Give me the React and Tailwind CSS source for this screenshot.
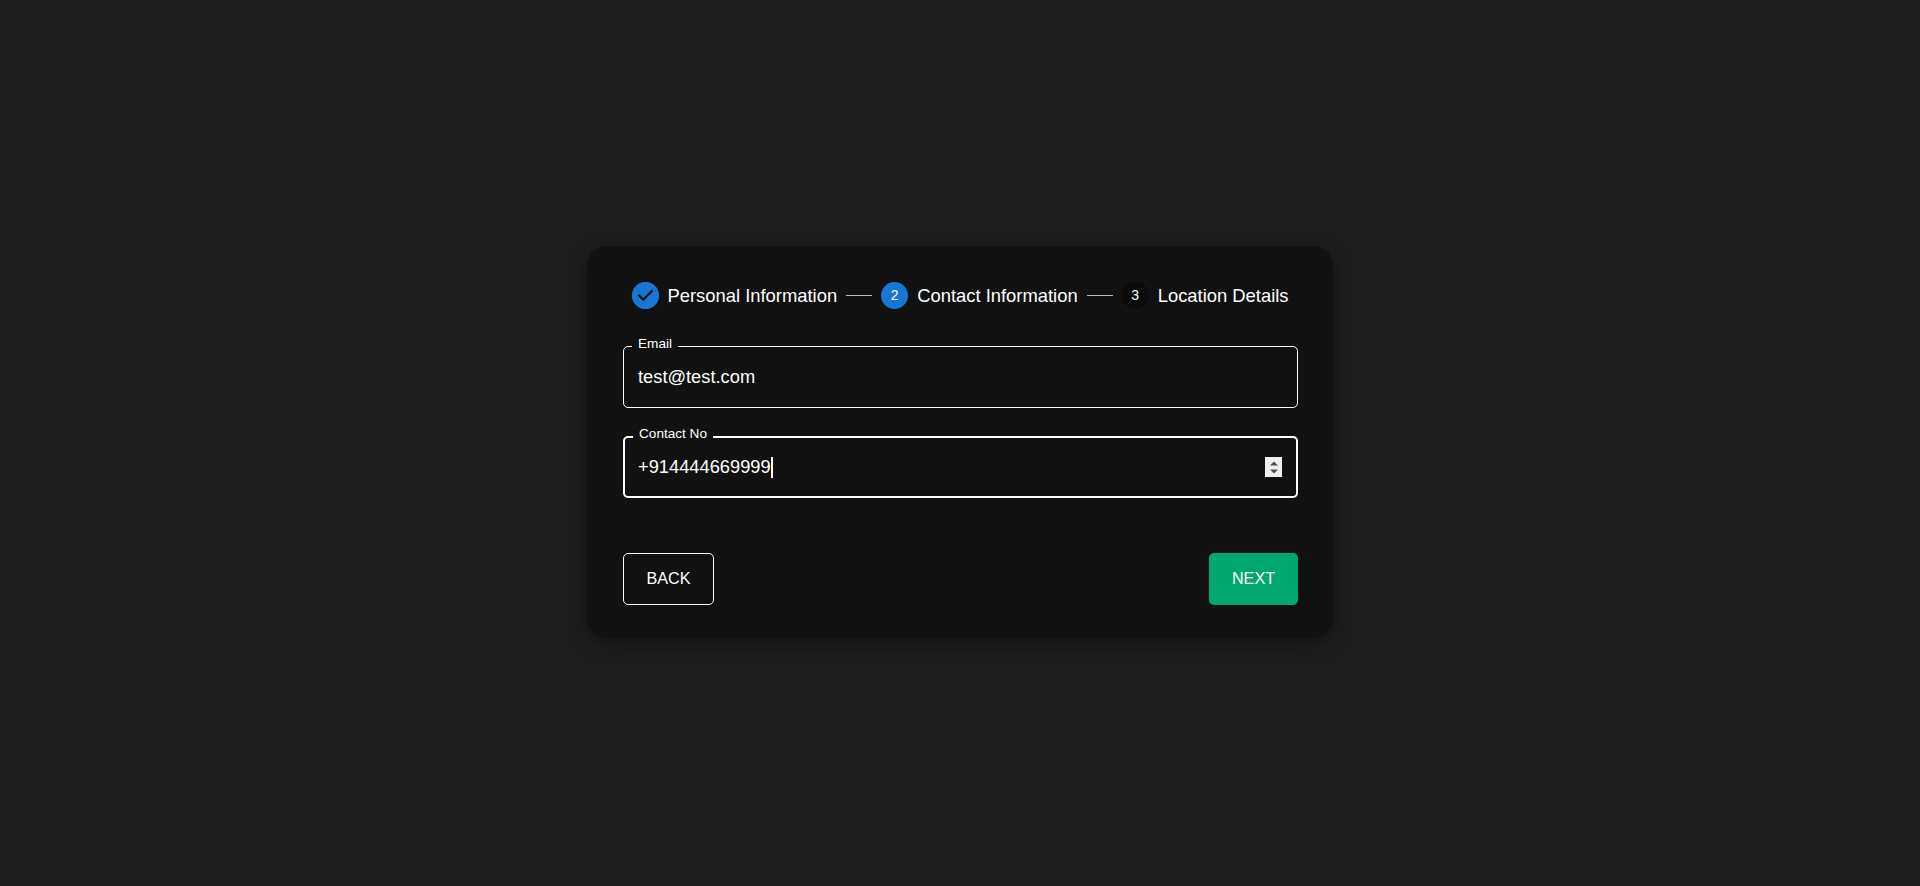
const font = "[font-family:'Liberation_Sans',Arial,sans-serif]";

function StepCircle({ children, dark }) {
  return (
    <div
      className={`w-[27px] h-[27px] rounded-full flex items-center justify-center shrink-0 text-[14px] text-white ${
        dark ? 'bg-[#0a0a0a]' : 'bg-[#1976d2]'
      }`}
    >
      {children}
    </div>
  );
}

function Connector() {
  return <div className="w-[26px] h-px bg-[#bdbdbd] mx-[9px] shrink-0" />;
}

function Field({ label, focused, children }) {
  return (
    <div
      className={`relative h-[62px] rounded-[5px] border-white flex items-center pr-[14px] ${
        focused ? 'border-2 pl-[13px]' : 'border pl-[14px]'
      }`}
    >
      <span
        className={`absolute left-[8px] px-[6px] bg-[#111111] text-[13.6px] leading-[15px] text-white ${
          focused ? '-top-[12px]' : '-top-[11px]'
        }`}
      >
        {label}
      </span>
      {children}
    </div>
  );
}

export default function App() {
  return (
    <div className={`${font} min-h-[886px] bg-[#1e1e1e] flex items-center justify-center text-white`}>
      <div className="w-[746px] h-[392px] mb-[2px] rounded-[20px] bg-[#111111] pt-[36px] pl-[36px] pr-[35px] shadow-[0_5px_20px_rgba(0,0,0,0.4)] flex flex-col">
        <div className="flex items-center justify-center h-[27px] text-[18.4px] whitespace-nowrap">
          <StepCircle>
            <svg viewBox="0 0 24 24" className="w-[27px] h-[27px]">
              <path
                fill="#1976d2"
                d="M12 0a12 12 0 1 0 0 24 12 12 0 0 0 0-24zm-2 17l-5-5 1.4-1.4 3.6 3.6 7.6-7.6L19 8l-9 9z"
              />
              <path fill="#111111" d="M10 17l-5-5 1.4-1.4 3.6 3.6 7.6-7.6L19 8l-9 9z" />
            </svg>
          </StepCircle>
          <span className="ml-[8px]">Personal Information</span>
          <Connector />
          <StepCircle>2</StepCircle>
          <span className="ml-[9px]">Contact Information</span>
          <Connector />
          <StepCircle dark>3</StepCircle>
          <span className="ml-[9px]">Location Details</span>
        </div>

        <div className="mt-[37px] flex flex-col gap-[28px]">
          <Field label="Email">
            <span className="text-[18.3px]">test@test.com</span>
          </Field>
          <Field label="Contact No" focused>
            <span className="text-[18.3px]">+914444669999</span>
            <span className="w-[2px] h-[21px] bg-white" />
            <div className="ml-auto w-[17px] h-[20px] bg-[#efefef] flex flex-col items-center justify-center gap-[3px]">
              <svg viewBox="0 0 8 4" className="w-[8px] h-[5px]">
                <path fill="#505050" d="M4 0l4 4H0z" />
              </svg>
              <svg viewBox="0 0 8 4" className="w-[8px] h-[5px]">
                <path fill="#505050" d="M0 0h8L4 4z" />
              </svg>
            </div>
          </Field>
        </div>

        <div className="mt-[55px] flex justify-between">
          <button className="w-[91px] h-[52px] pb-[2px] rounded-[5px] border border-white text-[16.2px] text-white">
            BACK
          </button>
          <button className="w-[89px] h-[52px] pb-[2px] rounded-[5px] bg-[#00a76f] text-[16.2px] text-white">
            NEXT
          </button>
        </div>
      </div>
    </div>
  );
}
